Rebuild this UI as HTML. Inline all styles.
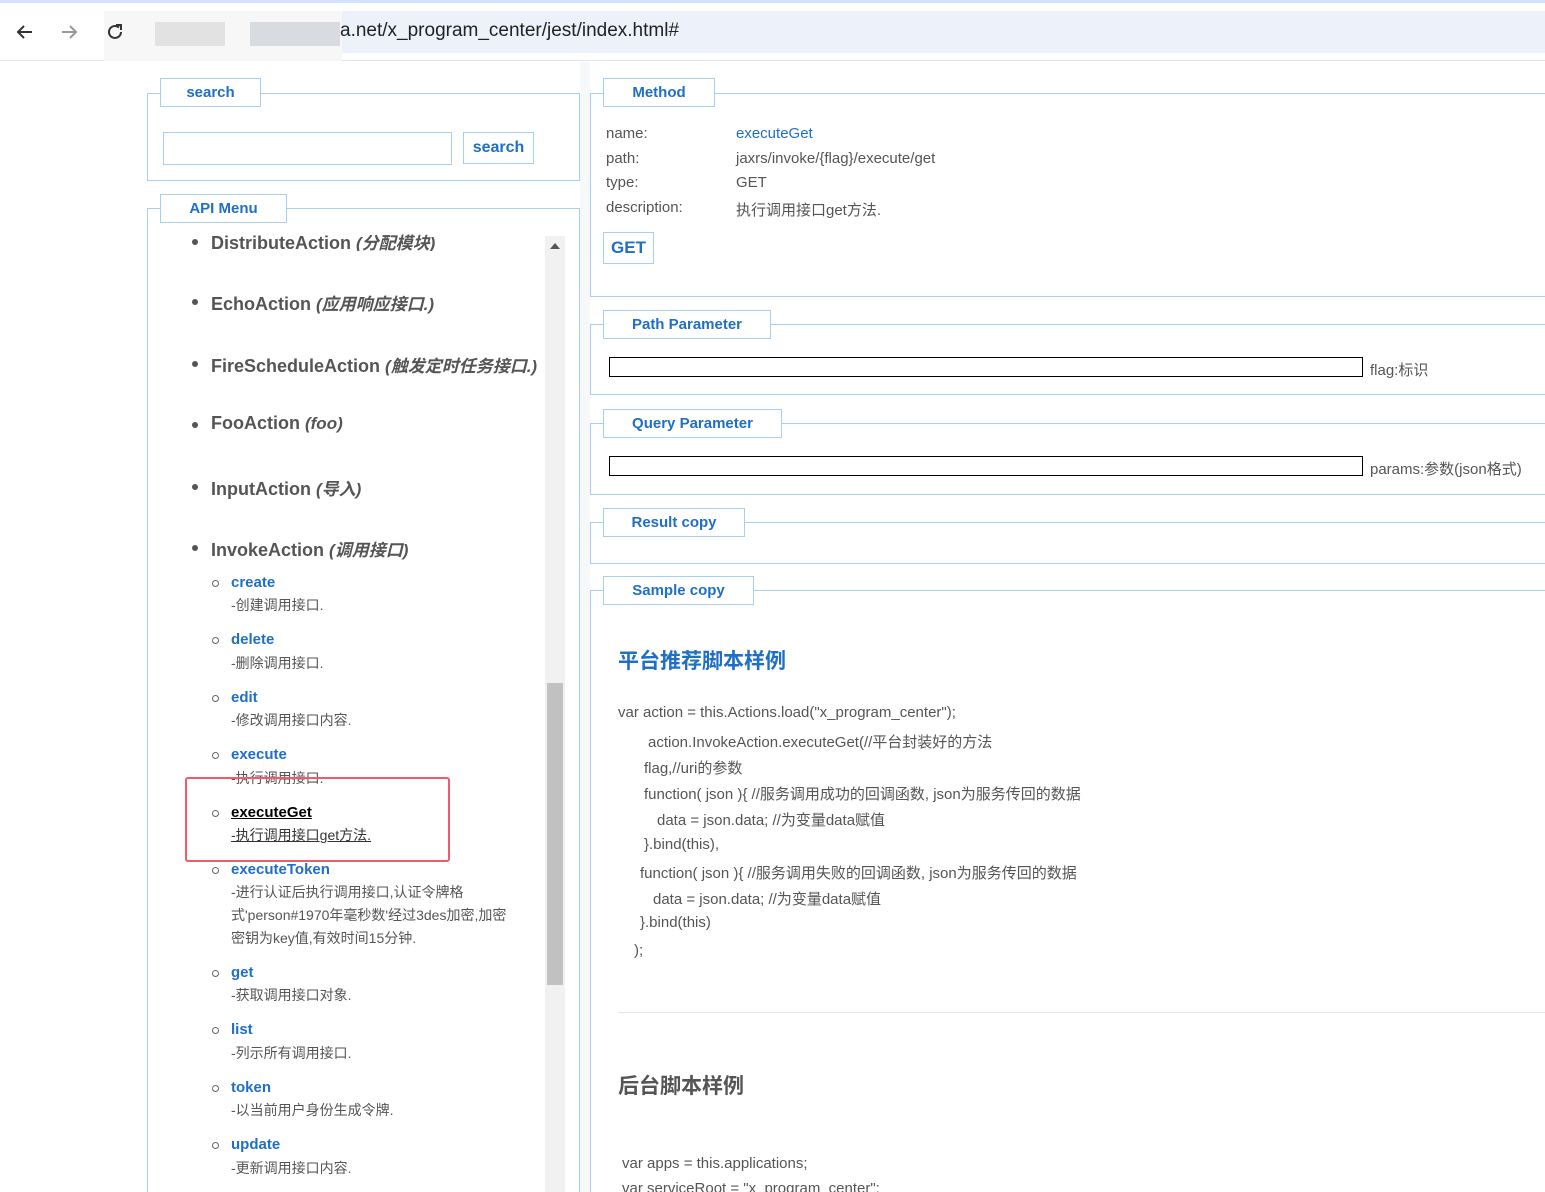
<!DOCTYPE html>
<html style="overflow:hidden;height:1192px"><head><meta charset="utf-8"><style>
*{margin:0;padding:0;box-sizing:border-box}
body{width:1545px;height:1192px;overflow:hidden;background:#fff;font-family:"Liberation Sans","Noto Sans CJK SC",sans-serif;color:#555;position:relative}
.a{position:absolute;white-space:nowrap}
.fs{position:absolute;border:1px solid #a8cff0}
.lg{position:absolute;border:1px solid #a8cff0;background:#fff;color:#1f6fc6;font-weight:bold;font-size:15px;text-align:center;line-height:27px}
.mi{position:absolute;left:211px;font-size:18px;font-weight:bold;color:#555}
.mi i{font-size:17px}
.dot{position:absolute;left:192px;width:6px;height:6px;border-radius:50%;background:#555}
.sd{position:absolute;left:212px;width:7px;height:7px;border-radius:50%;border:1px solid #666}
.sn{position:absolute;left:231px;font-size:15px;font-weight:bold;color:#1f6fc6}
.ds{position:absolute;left:231px;font-size:14px;color:#555;line-height:23px}
.c{position:absolute;font-size:15px;color:#555;white-space:nowrap}
</style></head><body>
<div class="a" style="left:0;top:0;width:1545px;height:3px;background:#d3e3fd"></div>
<div class="a" style="left:0;top:3px;width:1545px;height:58px;background:#fff;border-bottom:1px solid #e3e3e3"></div>
<div class="a" style="left:140px;top:11px;width:1405px;height:42px;background:#edf2fa;border-radius:21px 0 0 21px"></div>
<div class="a" style="left:104px;top:11px;width:238px;height:50px;background:#f7f7f7"></div>
<div class="a" style="left:155px;top:22px;width:70px;height:24px;background:#e2e2e2"></div>
<div class="a" style="left:250px;top:22px;width:90px;height:24px;background:#d8dbe0"></div>
<div class="a" style="left:340px;top:20px;font-size:19px;color:#222">a.net/x_program_center/jest/index.html#</div>
<svg class="a" style="left:14px;top:21px" width="22" height="22" viewBox="0 0 22 22"><path d="M18 11H4M10 5l-6 6 6 6" stroke="#333" stroke-width="2" fill="none"/></svg>
<svg class="a" style="left:58px;top:21px" width="22" height="22" viewBox="0 0 22 22"><path d="M4 11h14M12 5l6 6-6 6" stroke="#999" stroke-width="2" fill="none"/></svg>
<svg class="a" style="left:104px;top:21px" width="22" height="22" viewBox="0 0 22 22"><path d="M17 11a6 6 0 1 1-2-4.5" stroke="#333" stroke-width="2" fill="none"/><path d="M12 4h5v5" stroke="#333" stroke-width="2" fill="none"/></svg>

<div class="a" style="left:580px;top:62px;width:10px;height:1130px;background:#f7f8f9"></div>

<div class="fs" style="left:147px;top:93px;width:433px;height:88px"></div>
<div class="lg" style="left:160px;top:78px;width:101px;height:29px">search</div>
<div class="a" style="left:163px;top:132px;width:289px;height:33px;border:1px solid #a8cff0"></div>
<div class="lg" style="left:463px;top:132px;width:71px;height:32px;line-height:30px;font-size:16px">search</div>

<div class="fs" style="left:147px;top:208px;width:433px;height:990px"></div>
<div class="lg" style="left:160px;top:194px;width:127px;height:29px">API Menu</div>
<div class="a" style="left:545px;top:236px;width:20px;height:956px;background:#f1f1f1"></div>
<div class="a" style="left:547px;top:683px;width:16px;height:302px;background:#c1c1c1"></div>
<div class="a" style="left:550px;top:243px;width:0;height:0;border-left:5px solid transparent;border-right:5px solid transparent;border-bottom:6px solid #555"></div>
<div class="a" style="left:148px;top:224px;width:397px;height:27px;overflow:hidden">
 <div class="mi" style="left:63px;top:5px">DistributeAction <i>(分配模块)</i></div>
 <div class="dot" style="left:44px;top:15px"></div>
</div>
<div class="dot" style="top:299px"></div><div class="mi" style="top:290px">EchoAction <i>(应用响应接口.)</i></div>
<div class="dot" style="top:361px"></div><div class="mi" style="top:352px">FireScheduleAction <i>(触发定时任务接口.)</i></div>
<div class="dot" style="top:422px"></div><div class="mi" style="top:413px">FooAction <i>(foo)</i></div>
<div class="dot" style="top:484px"></div><div class="mi" style="top:475px">InputAction <i>(导入)</i></div>
<div class="dot" style="top:545px"></div><div class="mi" style="top:536px">InvokeAction <i>(调用接口)</i></div>

<div class="sd" style="top:580px"></div><div class="sn" style="top:574px">create</div><div class="ds" style="top:594px">-创建调用接口.</div>
<div class="sd" style="top:637px"></div><div class="sn" style="top:631px">delete</div><div class="ds" style="top:652px">-删除调用接口.</div>
<div class="sd" style="top:695px"></div><div class="sn" style="top:689px">edit</div><div class="ds" style="top:709px">-修改调用接口内容.</div>
<div class="sd" style="top:752px"></div><div class="sn" style="top:746px">execute</div><div class="ds" style="top:767px">-执行调用接口.</div>
<div class="sd" style="top:810px"></div><div class="sn" style="top:804px;color:#000;text-decoration:underline">executeGet</div><div class="ds" style="top:824px;color:#333;text-decoration:underline">-执行调用接口get方法.</div>
<div class="a" style="left:185px;top:777px;width:265px;height:85px;border:2px solid #f05a6a;border-radius:3px"></div>
<div class="sd" style="top:867px"></div><div class="sn" style="top:861px">executeToken</div><div class="ds" style="top:881px">-进行认证后执行调用接口,认证令牌格<br>式'person#1970年毫秒数'经过3des加密,加密<br>密钥为key值,有效时间15分钟.</div>
<div class="sd" style="top:970px"></div><div class="sn" style="top:964px">get</div><div class="ds" style="top:984px">-获取调用接口对象.</div>
<div class="sd" style="top:1027px"></div><div class="sn" style="top:1021px">list</div><div class="ds" style="top:1042px">-列示所有调用接口.</div>
<div class="sd" style="top:1085px"></div><div class="sn" style="top:1079px">token</div><div class="ds" style="top:1099px">-以当前用户身份生成令牌.</div>
<div class="sd" style="top:1142px"></div><div class="sn" style="top:1136px">update</div><div class="ds" style="top:1157px">-更新调用接口内容.</div>

<div class="fs" style="left:590px;top:93px;width:960px;height:204px"></div>
<div class="lg" style="left:603px;top:78px;width:112px;height:29px">Method</div>
<div class="c" style="left:606px;top:125px">name:</div><div class="c" style="left:736px;top:125px;color:#1f6fc6">executeGet</div>
<div class="c" style="left:606px;top:150px">path:</div><div class="c" style="left:736px;top:150px">jaxrs/invoke/{flag}/execute/get</div>
<div class="c" style="left:606px;top:174px">type:</div><div class="c" style="left:736px;top:174px">GET</div>
<div class="c" style="left:606px;top:199px">description:</div><div class="c" style="left:736px;top:199px">执行调用接口get方法.</div>
<div class="lg" style="left:603px;top:232px;width:51px;height:32px;line-height:30px;font-size:17px">GET</div>

<div class="fs" style="left:590px;top:324px;width:960px;height:71px"></div>
<div class="lg" style="left:603px;top:310px;width:168px;height:29px">Path Parameter</div>
<div class="a" style="left:609px;top:357px;width:754px;height:20px;border:1px solid #000"></div>
<div class="c" style="left:1370px;top:359px">flag:标识</div>

<div class="fs" style="left:590px;top:423px;width:960px;height:72px"></div>
<div class="lg" style="left:603px;top:409px;width:179px;height:29px">Query Parameter</div>
<div class="a" style="left:609px;top:456px;width:754px;height:20px;border:1px solid #000"></div>
<div class="c" style="left:1370px;top:458px">params:参数(json格式)</div>

<div class="fs" style="left:590px;top:522px;width:960px;height:42px"></div>
<div class="lg" style="left:603px;top:508px;width:142px;height:29px">Result copy</div>

<div class="fs" style="left:590px;top:590px;width:960px;height:610px"></div>
<div class="lg" style="left:603px;top:576px;width:151px;height:29px">Sample copy</div>

<div class="a" style="left:618px;top:645px;font-size:21px;font-weight:bold;color:#1f6fc6">平台推荐脚本样例</div>
<div class="c" style="left:618px;top:704px">var action = this.Actions.load("x_program_center");</div>
<div class="c" style="left:648px;top:731px">action.InvokeAction.executeGet(//平台封装好的方法</div>
<div class="c" style="left:644px;top:757px">flag,//uri的参数</div>
<div class="c" style="left:644px;top:783px">function( json ){ //服务调用成功的回调函数, json为服务传回的数据</div>
<div class="c" style="left:657px;top:809px">data = json.data; //为变量data赋值</div>
<div class="c" style="left:644px;top:836px">}.bind(this),</div>
<div class="c" style="left:640px;top:862px">function( json ){ //服务调用失败的回调函数, json为服务传回的数据</div>
<div class="c" style="left:653px;top:888px">data = json.data; //为变量data赋值</div>
<div class="c" style="left:640px;top:914px">}.bind(this)</div>
<div class="c" style="left:634px;top:942px">);</div>
<div class="a" style="left:618px;top:1012px;width:927px;height:1px;background:#e5e5e5"></div>
<div class="a" style="left:618px;top:1070px;font-size:21px;font-weight:bold;color:#555">后台脚本样例</div>
<div class="c" style="left:622px;top:1155px">var apps = this.applications;</div>
<div class="c" style="left:622px;top:1180px">var serviceRoot = "x_program_center";</div>
</body></html>
